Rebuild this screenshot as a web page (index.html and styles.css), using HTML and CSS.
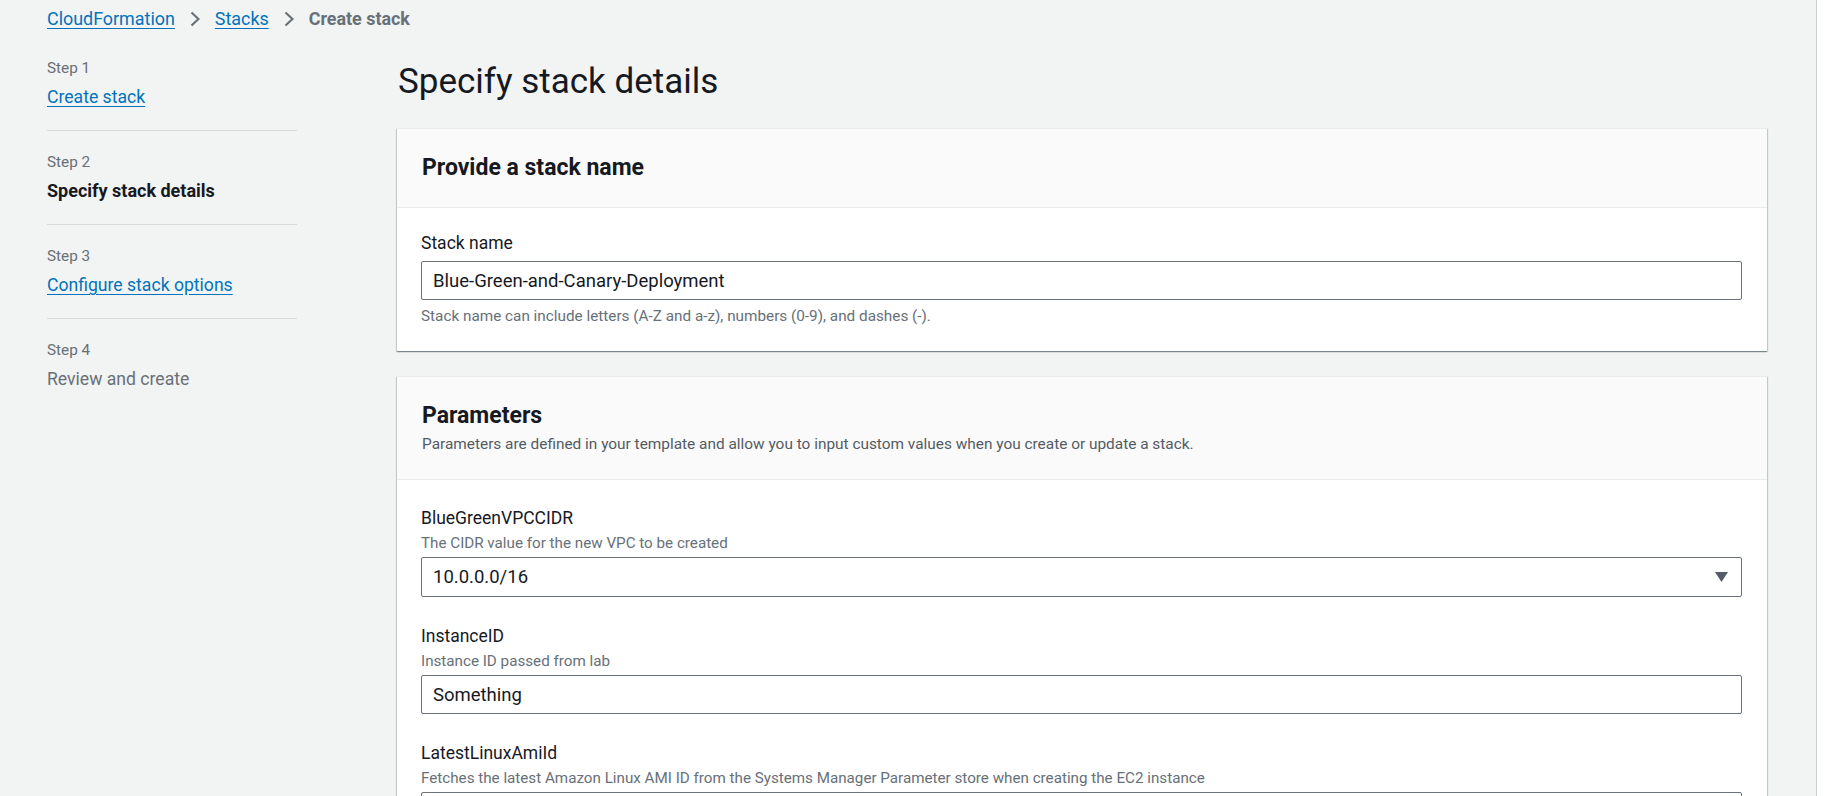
FILE: index.html
```html
<!DOCTYPE html>
<html lang="en">
<head>
<meta charset="utf-8">
<title>Create stack</title>
<link rel="stylesheet" href="styles.css">
</head>
<body>
<div class="app">
  <div class="main">
    <nav class="breadcrumbs">
      <a class="crumb-link" href="#">CloudFormation</a>
      <svg class="chev" width="10" height="16" viewBox="0 0 10 16"><path d="M1.5 1.5l7 6.5-7 6.5" fill="none" stroke="#687078" stroke-width="2.2"/></svg>
      <a class="crumb-link" href="#">Stacks</a>
      <svg class="chev" width="10" height="16" viewBox="0 0 10 16"><path d="M1.5 1.5l7 6.5-7 6.5" fill="none" stroke="#687078" stroke-width="2.2"/></svg>
      <span class="crumb-current">Create stack</span>
    </nav>
    <div class="layout">
      <ul class="steps">
        <li class="step">
          <div class="step-num">Step 1</div>
          <a class="step-name link" href="#">Create stack</a>
        </li>
        <li class="step">
          <div class="step-num">Step 2</div>
          <div class="step-name current">Specify stack details</div>
        </li>
        <li class="step">
          <div class="step-num">Step 3</div>
          <a class="step-name link" href="#">Configure stack options</a>
        </li>
        <li class="step">
          <div class="step-num">Step 4</div>
          <div class="step-name disabled">Review and create</div>
        </li>
      </ul>
      <main class="content">
        <h1 class="page-title">Specify stack details</h1>

        <section class="card">
          <header class="card-header">
            <h2 class="card-title">Provide a stack name</h2>
          </header>
          <div class="card-body first">
            <div class="field">
              <label class="field-label">Stack name</label>
              <div class="input mt6">Blue-Green-and-Canary-Deployment</div>
              <div class="help">Stack name can include letters (A-Z and a-z), numbers (0-9), and dashes (-).</div>
            </div>
          </div>
        </section>

        <section class="card">
          <header class="card-header">
            <h2 class="card-title">Parameters</h2>
            <p class="card-desc">Parameters are defined in your template and allow you to input custom values when you create or update a stack.</p>
          </header>
          <div class="card-body params">
            <div class="field">
              <label class="field-label">BlueGreenVPCCIDR</label>
              <div class="field-desc">The CIDR value for the new VPC to be created</div>
              <div class="input select">
                <span>10.0.0.0/16</span>
                <svg class="caret" width="13" height="10" viewBox="0 0 13 10"><path d="M0 0h13L6.5 10z" fill="#545b64"/></svg>
              </div>
            </div>
            <div class="field">
              <label class="field-label">InstanceID</label>
              <div class="field-desc">Instance ID passed from lab</div>
              <div class="input">Something</div>
            </div>
            <div class="field">
              <label class="field-label">LatestLinuxAmiId</label>
              <div class="field-desc">Fetches the latest Amazon Linux AMI ID from the Systems Manager Parameter store when creating the EC2 instance</div>
              <div class="input"></div>
            </div>
          </div>
        </section>
      </main>
    </div>
  </div>
  <aside class="side-strip"></aside>
</div>
</body>
</html>
```

FILE: styles.css
```css
* { box-sizing: border-box; }

html, body {
  margin: 0;
  padding: 0;
  height: 100%;
  overflow: hidden;
}

body {
  background: #f2f3f3;
  color: #16191f;
  font-family: Roboto, "Liberation Sans", sans-serif;
  font-size: 17px;
}

.app {
  display: flex;
  height: 796px;
}

.main {
  flex: 1;
  padding-left: 47px;
  min-width: 0;
}

.side-strip {
  width: 14px;
  background: #ffffff;
  border-left: 1px solid #c9cfcf;
}

/* breadcrumbs */
.breadcrumbs {
  display: flex;
  align-items: center;
  height: 38px;
  padding-bottom: 1px;
  font-size: 17.9px;
}

.crumb-link {
  color: #0073bb;
  text-decoration: underline;
  text-underline-offset: 3px;
}

.chev {
  margin: 0 15px 0 15px;
}

.crumb-current {
  color: #687078;
  font-weight: 700;
}

/* layout */
.layout {
  display: flex;
  gap: 100px;
}

.steps {
  list-style: none;
  margin: 0;
  padding: 0;
  width: 250px;
  flex: none;
}

.step {
  padding: 21px 0;
  border-top: 1px solid #d5dbdb;
}

.step:first-child {
  border-top: none;
  padding-top: 20px;
}

.step-num {
  color: #687078;
  font-size: 15.3px;
  line-height: 20px;
}

.step-name {
  display: inline-block;
  margin-top: 7px;
  line-height: 24px;
  font-size: 17.6px;
}

.step-name.link {
  color: #0073bb;
  text-decoration: underline;
  text-underline-offset: 3px;
}

.step-name.current {
  font-weight: 700;
  font-size: 18px;
}

.step-name.disabled {
  color: #687078;
}

.content {
  flex: 1;
  min-width: 0;
  margin-right: 49px;
  padding-top: 22px;
}

.page-title {
  margin: 0 0 24px 1px;
  font-size: 35px;
  font-weight: 400;
  line-height: 44px;
}

/* cards */
.card {
  background: #ffffff;
  border-top: 1px solid #eaeded;
  box-shadow: 0 1px 1px 0 rgba(0, 28, 36, 0.3), 1px 1px 1px 0 rgba(0, 28, 36, 0.15), -1px 1px 1px 0 rgba(0, 28, 36, 0.15);
  margin-bottom: 25px;
}

.card-header {
  background: #fafafa;
  border-bottom: 1px solid #eaeded;
  padding: 25px 25px 25px;
}

.card-title {
  margin: 0;
  font-size: 23px;
  font-weight: 700;
  line-height: 28px;
}

.card-desc {
  margin: 4px 0 0;
  font-size: 15.4px;
  line-height: 20px;
  color: #545b64;
}

.card-body {
  padding: 23px 25px 25px 24px;
}

.card-body.params {
  padding-top: 26px;
}

.field + .field {
  margin-top: 27px;
}

.field-label {
  display: block;
  font-size: 17.5px;
  line-height: 24px;
}

.field-desc {
  margin-top: 3px;
  font-size: 15.2px;
  line-height: 20px;
  color: #687078;
}

.input {
  display: flex;
  align-items: center;
  justify-content: space-between;
  height: 39px;
  margin-top: 4px;
  padding: 0 12px 0 11px;
  border: 1px solid #6b7178;
  border-radius: 2px;
  background: #ffffff;
  font-size: 18.5px;
  color: #16191f;
}

.input.mt6 {
  margin-top: 6px;
}

.input.select {
  height: 40px;
  padding-right: 13px;
}

.help {
  margin-top: 6px;
  font-size: 15.3px;
  line-height: 20px;
  color: #687078;
}
```
